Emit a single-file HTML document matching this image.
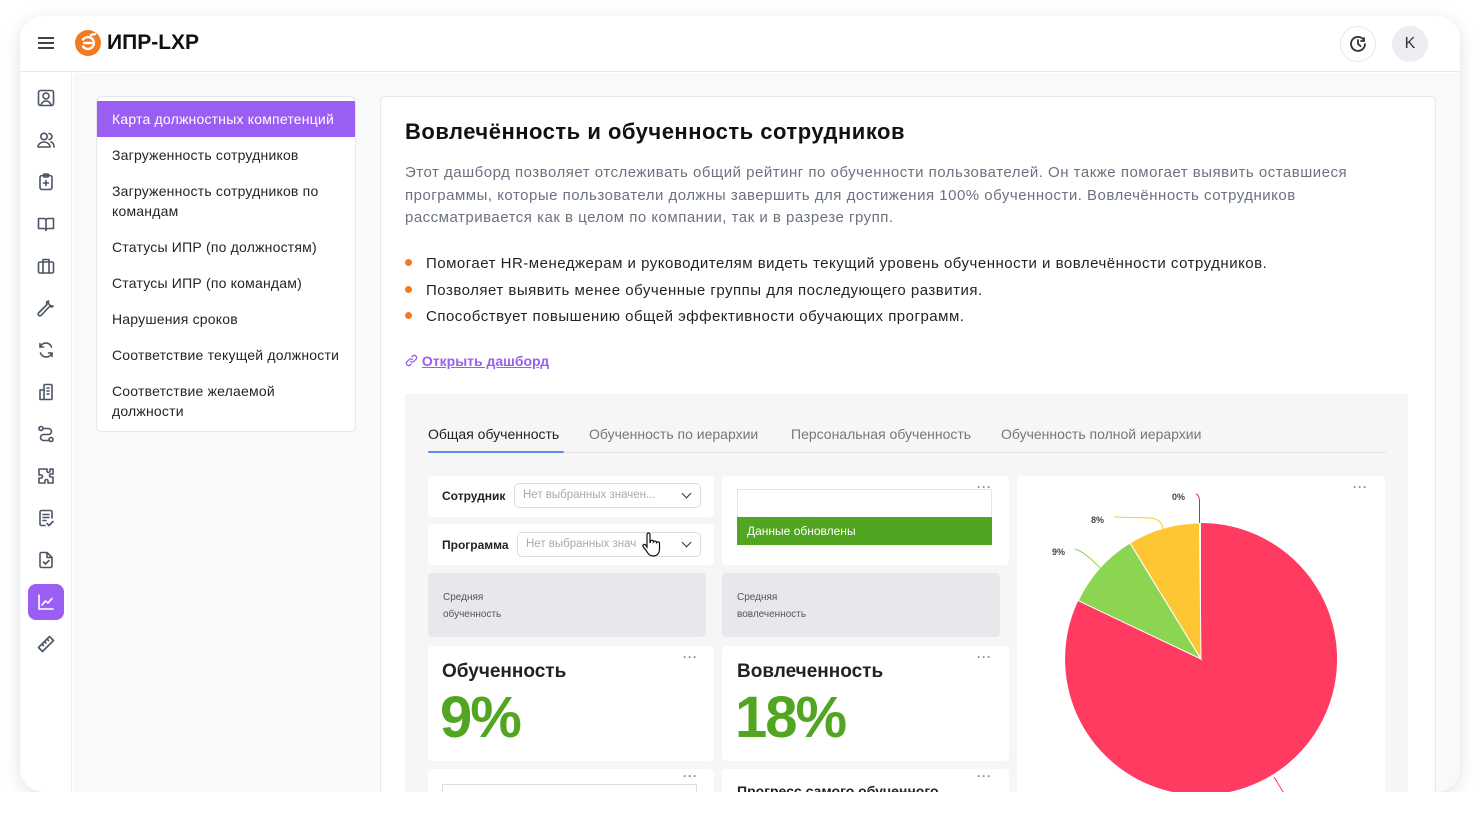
<!DOCTYPE html>
<html><head><meta charset="utf-8"><style>
*{box-sizing:border-box;margin:0;padding:0}
body{width:1480px;height:816px;background:#fff;font-family:"Liberation Sans","Noto Sans CJK SC",sans-serif;color:#1f2329;overflow:hidden;position:relative}
.frame{position:absolute;left:20px;top:16px;width:1440px;height:776px;border-radius:24px;background:#fff;box-shadow:0 4px 18px rgba(0,0,0,.12);overflow:hidden}
.hdr{position:absolute;left:0;top:0;width:1440px;height:56px;border-bottom:1px solid #e5e7eb;background:#fff}
.side{position:absolute;left:0;top:57px;width:52px;bottom:0;background:#fff;border-right:1px solid #eceef2}
.main{position:absolute;left:53px;top:57px;right:0;bottom:0;background:#f8f9fb}
.ic{position:absolute;left:8px;width:36px;height:36px;border-radius:8px;display:flex;align-items:center;justify-content:center}
.ic svg{width:20px;height:20px;fill:none;stroke:#4b5563;stroke-width:1.6;stroke-linecap:round;stroke-linejoin:round}
.menu{position:absolute;left:96px;top:96px;width:260px;height:336px;background:#fff;border:1px solid #e5e7eb;border-radius:6px;overflow:hidden}
.menu div{padding:0 15px;font-size:14px;color:#1f2329;line-height:20px;width:258px;letter-spacing:.2px;white-space:nowrap}
.card{position:absolute;left:380px;top:96px;width:1056px;height:720px;background:#fff;border:1px solid #e5e7eb;border-radius:6px}
.w{position:absolute;background:#fff;border-radius:4px}
.dots{position:absolute;font-size:12px;color:#888;letter-spacing:1px;font-weight:bold}
.sel{position:absolute;height:25px;border:1px solid #ddd;border-radius:5px;background:#fff;font-size:11.5px;color:#aaa;padding:5px 8px;white-space:nowrap}
.sel:after{content:"";position:absolute;right:10px;top:6px;width:6px;height:6px;border-right:1.5px solid #333;border-bottom:1.5px solid #333;transform:rotate(45deg)}
.gray{position:absolute;background:#e6e8eb;border-radius:4px;font-size:10px;color:#555;line-height:17px;padding:16px 15px}
</style></head><body>
<div class="frame">
<div class="hdr">
 <div style="position:absolute;left:18px;top:21px;width:16px;height:2px;background:#444;box-shadow:0 5px 0 #444,0 10px 0 #444"></div>
 <svg style="position:absolute;left:55px;top:14px" width="26" height="26" viewBox="0 0 26 26"><circle cx="13" cy="13" r="13" fill="#f47a20"/><path d="M8 9.5a6 6 0 1 1 0 7M9 13h8" stroke="#fff" stroke-width="2.4" fill="none" stroke-linecap="round"/><path d="M16 5l4-1" stroke="#fff" stroke-width="2.4" stroke-linecap="round"/></svg>
 <div style="position:absolute;left:87px;top:15px;font-size:21px;font-weight:bold;color:#111">ИПР-LXP</div>
 <div style="position:absolute;left:1320px;top:10px;width:36px;height:36px;border-radius:50%;border:1px solid #e5e7eb;background:#fff"><svg style="position:absolute;left:7px;top:7px" width="20" height="20" viewBox="0 0 20 20" fill="none" stroke="#333" stroke-width="1.8" stroke-linecap="round"><path d="M17 10a7 7 0 1 1-2-5"/><path d="M10 6v4l2.5 2"/><path d="M16 4v3h-3"/></svg></div>
 <div style="position:absolute;left:1372px;top:10px;width:36px;height:36px;border-radius:50%;background:#eceef2;text-align:center;line-height:36px;font-size:16px;color:#333">K</div>
</div>
<div class="side">
 <div class="ic" style="top:7px"><svg viewBox="0 0 20 20"><rect x="2.5" y="2.5" width="15" height="15" rx="2"/><circle cx="10" cy="8" r="3"/><path d="M5 17c1-3 3-4 5-4s4 1 5 4"/></svg></div>
 <div class="ic" style="top:49px"><svg viewBox="0 0 20 20"><circle cx="8" cy="6.5" r="3.2"/><path d="M2 17c0-3 3-5 6-5s6 2 6 5z"/><path d="M13 3.5a3 3 0 0 1 0 6M15 12c2 .5 3 2.5 3 5"/></svg></div>
 <div class="ic" style="top:91px"><svg viewBox="0 0 20 20"><rect x="4" y="3.5" width="12" height="14" rx="2"/><rect x="7.5" y="2" width="5" height="3" rx="1"/><path d="M10 8.5v5M7.5 11h5"/></svg></div>
 <div class="ic" style="top:133px"><svg viewBox="0 0 20 20"><path d="M2.5 4.5h5.5a2 2 0 0 1 2 2v10a2 2 0 0 0-2-2H2.5zM17.5 4.5H12a2 2 0 0 0-2 2v10a2 2 0 0 1 2-2h5.5z"/></svg></div>
 <div class="ic" style="top:175px"><svg viewBox="0 0 20 20"><rect x="2.5" y="6" width="15" height="11" rx="1.5"/><path d="M7 6V3.5h6V6M7 6v11M13 6v11"/></svg></div>
 <div class="ic" style="top:217px"><svg viewBox="0 0 20 20"><path d="M12.5 3a4 4 0 0 0 4.5 5l-1 1-2.5-.5L5 17.5a1.8 1.8 0 0 1-2.5-2.5L11 6.5 10.5 4z"/></svg></div>
 <div class="ic" style="top:259px"><svg viewBox="0 0 20 20"><path d="M15.5 7A6 6 0 0 0 5 5.5L4 7M4.5 13A6 6 0 0 0 15 14.5l1-1.5"/><path d="M4 3.5V7h3.5M16 16.5V13h-3.5"/></svg></div>
 <div class="ic" style="top:301px"><svg viewBox="0 0 20 20"><rect x="8" y="2.5" width="8" height="15" rx="1"/><path d="M8 8H4v9.5h4M11 6h2M11 9h2M11 12h2"/></svg></div>
 <div class="ic" style="top:343px"><svg viewBox="0 0 20 20"><circle cx="5" cy="4.5" r="2"/><circle cx="15" cy="15.5" r="2"/><path d="M7.5 4.5h5a3 3 0 0 1 0 6h-5a3 3 0 0 0 0 6h5"/></svg></div>
 <div class="ic" style="top:385px"><svg viewBox="0 0 20 20"><path d="M8 3h3v2a1.5 1.5 0 0 0 3 0V3h3v5h-2a1.5 1.5 0 0 0 0 3h2v6h-5v-2a1.5 1.5 0 0 0-3 0v2H3v-5h2a1.5 1.5 0 0 0 0-3H3V3z"/></svg></div>
 <div class="ic" style="top:427px"><svg viewBox="0 0 20 20"><path d="M16 10V4a1.5 1.5 0 0 0-1.5-1.5h-9A1.5 1.5 0 0 0 4 4v12a1.5 1.5 0 0 0 1.5 1.5H9M7 6.5h6M7 9.5h6M7 12.5h3M11 15.5l2 2 4-4"/></svg></div>
 <div class="ic" style="top:469px"><svg viewBox="0 0 20 20"><path d="M11 2.5H5.5A1.5 1.5 0 0 0 4 4v12a1.5 1.5 0 0 0 1.5 1.5h9A1.5 1.5 0 0 0 16 16V7.5z M11 2.5v5h5M7.5 12l2 2 3.5-3.5"/></svg></div>
 <div class="ic" style="top:511px;background:#9b5ef2"><svg viewBox="0 0 20 20" style="stroke:#fff"><path d="M3 3v14h14M6 13l3.5-4 2.5 2 4-4.5"/></svg></div>
 <div class="ic" style="top:553px"><svg viewBox="0 0 20 20"><path d="M2.5 13.5l11-11 4 4-11 11zM6 10l1.5 1.5M8.5 7.5L10 9M11 5l1.5 1.5"/></svg></div>
</div>
<div class="main"></div>
</div>

<div class="menu">
 <div style="background:#9b5ef2;color:#fff;height:36px;line-height:36px;margin-top:4px">Карта должностных компетенций</div>
 <div style="margin-top:8px">Загруженность сотрудников</div>
 <div style="margin-top:16px">Загруженность сотрудников по<br>командам</div>
 <div style="margin-top:16px">Статусы ИПР (по должностям)</div>
 <div style="margin-top:16px">Статусы ИПР (по командам)</div>
 <div style="margin-top:16px">Нарушения сроков</div>
 <div style="margin-top:16px">Соответствие текущей должности</div>
 <div style="margin-top:16px">Соответствие желаемой<br>должности</div>
</div>

<div class="card"></div>
<div style="position:absolute;left:405px;top:119px;font-size:22px;font-weight:bold;color:#111;letter-spacing:.5px">Вовлечённость и обученность сотрудников</div>
<div style="position:absolute;left:405px;top:162px;width:1000px;font-size:15px;line-height:22.5px;color:#6b7280;letter-spacing:.5px;white-space:nowrap">Этот дашборд позволяет отслеживать общий рейтинг по обученности пользователей. Он также помогает выявить оставшиеся<br>программы, которые пользователи должны завершить для достижения 100% обученности. Вовлечённость сотрудников<br>рассматривается как в целом по компании, так и в разрезе групп.</div>
<div style="position:absolute;left:405px;top:251px;font-size:15px;line-height:26.5px;color:#1f2329;letter-spacing:.5px;white-space:nowrap">
 <div><span style="display:inline-block;width:7px;height:7px;border-radius:50%;background:#f47a20;margin-right:14px;vertical-align:2px"></span>Помогает HR-менеджерам и руководителям видеть текущий уровень обученности и вовлечённости сотрудников.</div>
 <div><span style="display:inline-block;width:7px;height:7px;border-radius:50%;background:#f47a20;margin-right:14px;vertical-align:2px"></span>Позволяет выявить менее обученные группы для последующего развития.</div>
 <div><span style="display:inline-block;width:7px;height:7px;border-radius:50%;background:#f47a20;margin-right:14px;vertical-align:2px"></span>Способствует повышению общей эффективности обучающих программ.</div>
</div>
<div style="position:absolute;left:405px;top:353px;font-size:14px;color:#9b5ef2"><svg width="13" height="13" viewBox="0 0 14 14" fill="none" stroke="#9b5ef2" stroke-width="1.4" stroke-linecap="round" style="vertical-align:-1px"><path d="M6 8a2.5 2.5 0 0 0 3.5 0l2.5-2.5a2.5 2.5 0 0 0-3.5-3.5L7.5 3M8 6a2.5 2.5 0 0 0-3.5 0L2 8.5A2.5 2.5 0 0 0 5.5 12l1-1"/></svg> <span style="text-decoration:underline;font-weight:bold">Открыть дашборд</span></div>

<div style="position:absolute;left:405px;top:394px;width:1003px;height:398px;background:#f6f6f6;overflow:hidden">
 <div style="position:absolute;left:23px;top:32px;font-size:14px;color:#222">Общая обученность</div>
 <div style="position:absolute;left:184px;top:32px;font-size:14px;color:#777">Обученность по иерархии</div>
 <div style="position:absolute;left:386px;top:32px;font-size:14px;color:#777">Персональная обученность</div>
 <div style="position:absolute;left:596px;top:32px;font-size:14px;color:#777">Обученность полной иерархии</div>
 <div style="position:absolute;left:23px;top:58px;width:958px;height:1px;background:#e3e3e3"></div>
 <div style="position:absolute;left:23px;top:57px;width:136px;height:2px;background:#5b8def;border-radius:1px"></div>

 <div class="w" style="left:23px;top:82px;width:286px;height:41px"><div style="position:absolute;left:14px;top:13px;font-size:12px;font-weight:bold;color:#222">Сотрудник</div><div class="sel" style="left:86px;top:7px;width:187px">Нет выбранных значен...</div></div>
 <div class="w" style="left:23px;top:130px;width:286px;height:41px"><div style="position:absolute;left:14px;top:14px;font-size:12px;font-weight:bold;color:#222">Программа</div><div class="sel" style="left:89px;top:8px;width:184px">Нет выбранных знач</div></div>
 <div class="w" style="left:317px;top:82px;width:287px;height:89px"><div class="dots" style="left:255px;top:4px">···</div><div style="position:absolute;left:15px;top:13px;width:255px;height:28px;border:1px solid #e5e5e5;border-bottom:none"></div><div style="position:absolute;left:15px;top:41px;width:255px;height:28px;background:#52a520;color:#fff;font-size:12px;line-height:28px;padding-left:10px">Данные обновлены</div></div>
 <div class="gray" style="left:23px;top:179px;width:278px;height:64px">Средняя<br>обученность</div>
 <div class="gray" style="left:317px;top:179px;width:278px;height:64px">Средняя<br>вовлеченность</div>
 <div class="w" style="left:23px;top:252px;width:286px;height:115px"><div class="dots" style="left:255px;top:4px">···</div><div style="position:absolute;left:14px;top:15px;font-size:19px;font-weight:bold;color:#222">Обученность</div><div style="position:absolute;left:12px;top:38px;font-size:58px;font-weight:bold;color:#52a520;letter-spacing:-2px">9%</div></div>
 <div class="w" style="left:317px;top:252px;width:287px;height:115px"><div class="dots" style="left:255px;top:4px">···</div><div style="position:absolute;left:15px;top:15px;font-size:19px;font-weight:bold;color:#222">Вовлеченность</div><div style="position:absolute;left:13px;top:38px;font-size:58px;font-weight:bold;color:#52a520;letter-spacing:-2px">18%</div></div>
 <div class="w" style="left:23px;top:375px;width:286px;height:40px"><div class="dots" style="left:255px;top:0px">···</div><div style="position:absolute;left:14px;top:15px;width:255px;height:20px;border:1px solid #ddd"></div></div>
 <div class="w" style="left:317px;top:375px;width:287px;height:40px"><div class="dots" style="left:255px;top:0px">···</div><div style="position:absolute;left:15px;top:14px;font-size:14px;font-weight:bold;color:#222">Прогресс самого обученного</div></div>
 <div class="w" style="left:612px;top:82px;width:368px;height:330px"><div class="dots" style="left:336px;top:4px">···</div></div>
 <svg style="position:absolute;left:0;top:0" width="1003" height="420">
  <g transform="translate(-405,-394)">
   <path d="M1201 659 L1201 523 A136 136 0 1 1 1078.2 600.7Z" fill="#ff3b61"/>
   <path d="M1201 659 L1078.2 600.7 A136 136 0 0 1 1130 543Z" fill="#8cd552" stroke="#fff" stroke-width="1"/>
   <path d="M1201 659 L1130 543 A136 136 0 0 1 1199.5 523Z" fill="#ffc634" stroke="#fff" stroke-width="1"/>
   <path d="M1199.5 523 L1199.5 500 Q1199 495 1196 494" stroke="#c9304f" fill="none"/>
   <path d="M1163 529 Q1162 519 1150 518 L1114 517" stroke="#ffc634" fill="none"/>
   <path d="M1100 568 Q1085 552 1075 549" stroke="#8cd552" fill="none"/>
   <path d="M1274 777 L1285 795" stroke="#ff3b61" fill="none"/>
   <text x="1172" y="500" font-size="9" font-weight="bold" fill="#444" font-family="Liberation Sans">0%</text>
   <text x="1091" y="523" font-size="9" font-weight="bold" fill="#444" font-family="Liberation Sans">8%</text>
   <text x="1052" y="555" font-size="9" font-weight="bold" fill="#444" font-family="Liberation Sans">9%</text>
  </g>
 </svg>
 <svg style="position:absolute;left:236px;top:138px" width="20" height="26" viewBox="0 0 20 26"><path d="M6 2.5a1.5 1.5 0 0 1 3 0V11l.5-1.5a1.5 1.5 0 0 1 3 .5l.3-.3a1.5 1.5 0 0 1 2.7 1l.3-.2a1.5 1.5 0 0 1 2.7 1V17c0 4-2.5 7-6 7s-5-1.5-7-5L2 14.5a1.5 1.5 0 0 1 2.3-1.8L6 15z" fill="#fff" stroke="#111" stroke-width="1.2"/></svg>
</div>
<div style="position:absolute;left:0;top:792px;width:1480px;height:24px;background:#fff"></div>
</body></html>
